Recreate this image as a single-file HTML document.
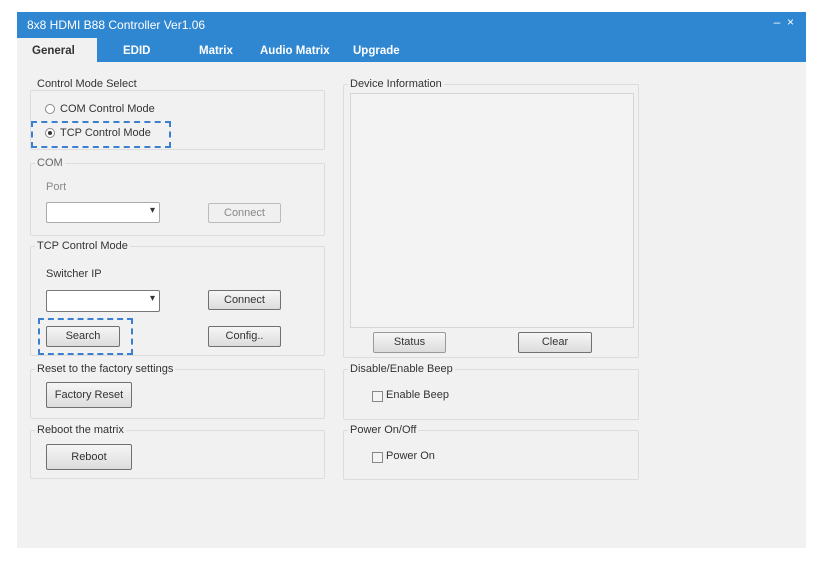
<!DOCTYPE html>
<html><head><meta charset="utf-8"><style>
*{box-sizing:border-box;margin:0;padding:0}
body{width:829px;height:567px;background:#fff;position:relative;font-family:"Liberation Sans",sans-serif;font-size:11px;color:#333;overflow:hidden}
.a{position:absolute}
#win{left:17px;top:12px;width:789px;height:536px;background:#f1f1f1}
#title{left:17px;top:12px;width:789px;height:26px;background:#2f86d1;color:#fff;font-size:12px;padding:6px 0 0 10px}
#tabs{left:17px;top:38px;width:789px;height:24px;background:#2f86d1}
.tab{position:absolute;color:#fff;font-weight:bold;font-size:11.5px}
#gen{left:17px;top:38px;width:80px;height:24px;background:#f1f1f1;color:#333;font-weight:bold;font-size:11.5px;padding:7px 0 0 15px}
.g{position:absolute;border:1px solid #dcdcdc;border-radius:2px}
.gl{position:absolute;background:#f1f1f1;padding:0 2px;font-size:11px;color:#333}
.btn{position:absolute;border:1px solid #707070;border-radius:2px;background:linear-gradient(#f6f6f6,#dcdcdc);text-align:center;font-size:11px;line-height:18px;color:#333}
.dis{border-color:#bbb;color:#888;background:#f0f0f0}
.cb{position:absolute;border:1px solid #777;border-radius:2px;background:#fff}
.cb::after{content:"▾";position:absolute;right:4px;top:2px;font-size:10px;color:#333}
.chk{position:absolute;width:11px;height:11px;border:1px solid #888;background:#f4f4f4}
.dash{position:absolute;border:2px dashed #3a7fd0}
.rad{position:absolute;width:10px;height:10px;border:1px solid #888;border-radius:50%;background:#fff}
</style></head><body>
<div id="win" class="a"></div>
<div id="title" class="a">8x8 HDMI B88 Controller Ver1.06<span style="position:absolute;right:12px;top:3px;font-weight:normal">–&nbsp;&nbsp;×</span></div>
<div id="tabs" class="a"></div>
<div id="gen" class="a">General</div>
<span class="tab a" style="left:123px;top:45px">EDID</span>
<span class="tab a" style="left:199px;top:45px">Matrix</span>
<span class="tab a" style="left:260px;top:45px">Audio Matrix</span>
<span class="tab a" style="left:353px;top:45px">Upgrade</span>

<div class="g" style="left:30px;top:90px;width:295px;height:60px"></div>
<span class="gl" style="left:35px;top:78px">Control Mode Select</span>
<div class="rad" style="left:45px;top:104px"></div><span class="a" style="left:60px;top:103px">COM Control Mode</span>
<div class="dash" style="left:31px;top:121px;width:140px;height:27px"></div>
<div class="rad" style="left:45px;top:128px"><div style="position:absolute;left:2px;top:2px;width:4px;height:4px;border-radius:50%;background:#333"></div></div><span class="a" style="left:60px;top:127px">TCP Control Mode</span>

<div class="g" style="left:30px;top:163px;width:295px;height:73px"></div>
<span class="gl" style="left:35px;top:157px;color:#666">COM</span>
<span class="a" style="left:46px;top:181px;color:#888">Port</span>
<div class="cb" style="left:46px;top:202px;width:114px;height:21px;border-color:#aaa"></div>
<div class="btn dis" style="left:208px;top:203px;width:73px;height:20px">Connect</div>

<div class="g" style="left:30px;top:246px;width:295px;height:110px"></div>
<span class="gl" style="left:35px;top:240px">TCP Control Mode</span>
<span class="a" style="left:46px;top:268px">Switcher IP</span>
<div class="cb" style="left:46px;top:290px;width:114px;height:22px"></div>
<div class="btn" style="left:208px;top:290px;width:73px;height:20px">Connect</div>
<div class="dash" style="left:38px;top:318px;width:95px;height:37px"></div>
<div class="btn" style="left:46px;top:326px;width:74px;height:21px">Search</div>
<div class="btn" style="left:208px;top:326px;width:73px;height:21px">Config..</div>

<div class="g" style="left:30px;top:369px;width:295px;height:50px"></div>
<span class="gl" style="left:35px;top:363px">Reset to the factory settings</span>
<div class="btn" style="left:46px;top:382px;width:86px;height:26px;line-height:24px">Factory Reset</div>

<div class="g" style="left:30px;top:430px;width:295px;height:49px"></div>
<span class="gl" style="left:35px;top:424px">Reboot the matrix</span>
<div class="btn" style="left:46px;top:444px;width:86px;height:26px;line-height:24px">Reboot</div>

<div class="g" style="left:343px;top:84px;width:296px;height:274px"></div>
<span class="gl" style="left:348px;top:78px">Device Information</span>
<div class="a" style="left:350px;top:93px;width:284px;height:235px;border:1px solid #d6d6d6;background:#f3f3f3"></div>
<div class="btn" style="left:373px;top:332px;width:73px;height:21px;border-color:#999">Status</div>
<div class="btn" style="left:518px;top:332px;width:74px;height:21px">Clear</div>

<div class="g" style="left:343px;top:369px;width:296px;height:51px"></div>
<span class="gl" style="left:348px;top:363px">Disable/Enable Beep</span>
<div class="chk" style="left:372px;top:391px"></div><span class="a" style="left:386px;top:389px">Enable Beep</span>

<div class="g" style="left:343px;top:430px;width:296px;height:50px"></div>
<span class="gl" style="left:348px;top:424px">Power On/Off</span>
<div class="chk" style="left:372px;top:452px"></div><span class="a" style="left:386px;top:450px">Power On</span>
</body></html>
